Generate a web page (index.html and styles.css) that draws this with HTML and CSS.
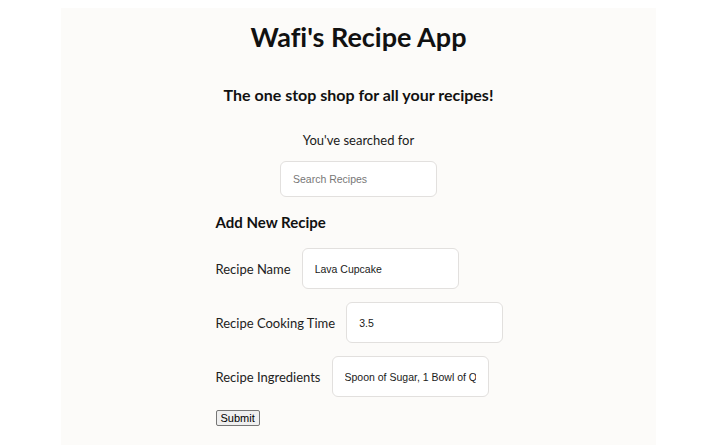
FILE: index.html
```html
<!DOCTYPE html>
<html lang="en">
<head>
    <meta charset="UTF-8">
    <meta name="viewport" content="width=device-width, initial-scale=1.0">
    <title>Wafi's Recipe App</title>
    <link rel="stylesheet" href="styles.css">
</head>
<body>

    <div class="page">
        <h1>Wafi's Recipe App</h1>
        <h3 class="tagline">The one stop shop for all your recipes!</h3>

        <div class="search">
            <p>You've searched for</p>
            <input type="text" class="field" placeholder="Search Recipes">
        </div>

        <form class="recipe-form">
            <h4>Add New Recipe</h4>

            <div class="row">
                <label for="name">Recipe Name</label>
                <input type="text" id="name" class="field" value="Lava Cupcake">
            </div>

            <div class="row">
                <label for="time">Recipe Cooking Time</label>
                <input type="text" id="time" class="field" value="3.5">
            </div>

            <div class="row">
                <label for="ingredients">Recipe Ingredients</label>
                <input type="text" id="ingredients" class="field" value="Spoon of Sugar, 1 Bowl of Q">
            </div>

            <button type="button">Submit</button>
        </form>
    </div>

</body>
</html>
```

FILE: styles.css
```css
body {
    margin: 0;
    background-color: #fff;
    font-family: Lato, "Noto Sans", sans-serif;
    font-variant-ligatures: none;
    color: #1a1a1a;
}
.page {
    max-width: 595px;
    margin: 8px auto 0;
    padding-top: 12px;
    padding-bottom: 20px;
    background-color: #fcfbf9;
}
h1 {
    text-align: center;
    font-size: 27px;
    margin: 0;
    color: #111;
}
.tagline {
    text-align: center;
    font-size: 16px;
    margin: 32px 0 0;
    color: #111;
}
.search {
    display: flex;
    flex-direction: column;
    align-items: center;
}
.search p {
    font-size: 13px;
    margin: 28px 0 13px;
}
.field {
    width: 157px;
    height: 36px;
    box-sizing: border-box;
    padding: 0 12px;
    border: 1px solid #e2e0de;
    border-radius: 6px;
    background-color: #fff;
    font-family: "Liberation Sans", Arial, sans-serif;
    font-size: 10.5px;
    color: #1a1a1a;
}
.field::placeholder {
    color: #777;
}
.recipe-form {
    width: 286px;
    margin: 16px auto 0;
}
.recipe-form h4 {
    font-size: 15px;
    margin: 0 0 17px;
    color: #111;
}
.row {
    display: flex;
    align-items: center;
    gap: 11px;
    margin-bottom: 13px;
}
.row label {
    font-size: 13px;
    white-space: nowrap;
    color: #222;
}
.row .field {
    flex: none;
    height: 41px;
}
button {
    display: block;
    margin-top: 5px;
    font-family: "Liberation Sans", Arial, sans-serif;
    font-size: 11px;
    padding: 1px 4px;
    background-color: #efefef;
    border: 1px solid #767676;
    border-radius: 2px;
    color: #000;
}
```
